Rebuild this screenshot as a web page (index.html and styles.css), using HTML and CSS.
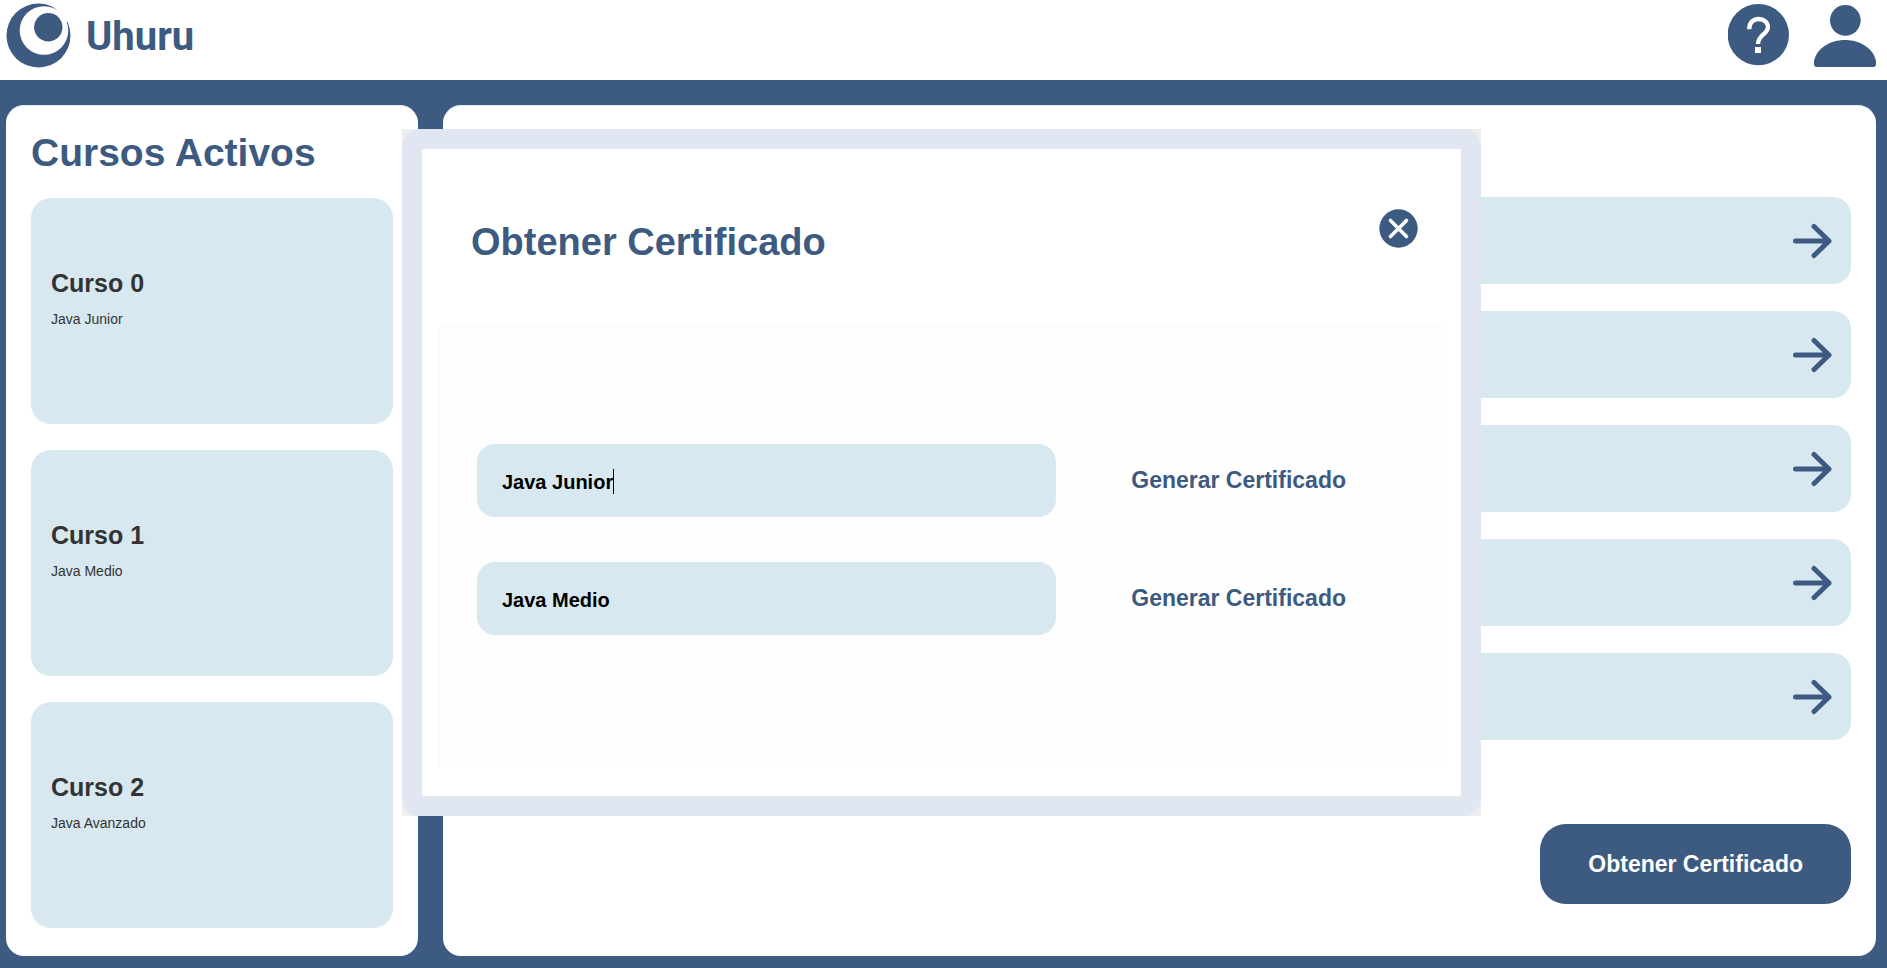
FILE: index.html
```html
<!DOCTYPE html>
<html lang="es">
<head>
<meta charset="utf-8">
<title>Uhuru</title>
<meta name="viewport" content="width=device-width, initial-scale=1">
<link rel="stylesheet" href="styles.css">
</head>
<body>
<header class="topbar">
  <a class="brand" href="#">
    <svg class="brand-logo" viewBox="0 0 65 65" aria-hidden="true">
      <circle cx="32.5" cy="32.5" r="32" fill="#3d5a80"/>
      <circle cx="38" cy="27.5" r="24.3" fill="#fff"/>
      <path d="M49 5 L61 19 L65 8 L55 0 Z" fill="#fff"/>
      <circle cx="42.3" cy="24.2" r="14.2" fill="#3d5a80"/>
    </svg>
    <span>Uhuru</span>
  </a>
  <nav class="tools" aria-label="Cuenta">
    <button class="icon-button" type="button" aria-label="Ayuda">
      <svg width="62" height="64" viewBox="84 9 186 192" aria-hidden="true">
        <circle cx="175" cy="104" r="92" fill="#3d5a80"/>
        <path d="M148 88 V85 C148 67 161 57 176 57 C192 57 204 67 204 82 C204 102 174 104 174 132" fill="none" stroke="#fff" stroke-width="13"/>
        <rect x="165" y="141" width="18" height="18" fill="#fff"/>
      </svg>
    </button>
    <button class="icon-button" type="button" aria-label="Perfil">
      <svg width="62" height="64" viewBox="342 9 186 192" aria-hidden="true">
        <circle cx="436" cy="61" r="46" fill="#3d5a80"/>
        <path d="M350 201 Q342 201 342 192 V183 C350 145 390 120 435 120 C480 120 520 145 528 183 V192 Q528 201 520 201 Z" fill="#3d5a80"/>
      </svg>
    </button>
  </nav>
</header>

<main class="workspace">
  <section class="panel courses">
    <h1 class="panel-title">Cursos Activos</h1>
    <div class="course-list">
      <article class="course">
        <h2>Curso 0</h2>
        <p>Java Junior</p>
      </article>
      <article class="course">
        <h2>Curso 1</h2>
        <p>Java Medio</p>
      </article>
      <article class="course">
        <h2>Curso 2</h2>
        <p>Java Avanzado</p>
      </article>
    </div>
  </section>

  <section class="panel detail">
    <div class="lessons">
      <button class="lesson" type="button" aria-label="Abrir"><svg class="arrow" viewBox="0 0 39 36" aria-hidden="true"><path d="M2.500 18H36M21 3.500L36 18L21 32.500"/></svg></button>
      <button class="lesson" type="button" aria-label="Abrir"><svg class="arrow" viewBox="0 0 39 36" aria-hidden="true"><path d="M2.500 18H36M21 3.500L36 18L21 32.500"/></svg></button>
      <button class="lesson" type="button" aria-label="Abrir"><svg class="arrow" viewBox="0 0 39 36" aria-hidden="true"><path d="M2.500 18H36M21 3.500L36 18L21 32.500"/></svg></button>
      <button class="lesson" type="button" aria-label="Abrir"><svg class="arrow" viewBox="0 0 39 36" aria-hidden="true"><path d="M2.500 18H36M21 3.500L36 18L21 32.500"/></svg></button>
      <button class="lesson" type="button" aria-label="Abrir"><svg class="arrow" viewBox="0 0 39 36" aria-hidden="true"><path d="M2.500 18H36M21 3.500L36 18L21 32.500"/></svg></button>
    </div>
    <button class="primary" type="button">Obtener Certificado</button>
  </section>
</main>

<div class="overlay">
  <div class="modal" role="dialog" aria-labelledby="modal-title">
    <div class="modal-frame">
      <div class="modal-body">
        <div class="modal-head">
          <h2 id="modal-title">Obtener Certificado</h2>
          <button class="close" type="button" aria-label="Cerrar">
            <svg width="39" height="39" viewBox="0 0 39 39" aria-hidden="true">
              <circle cx="19.500" cy="19.500" r="19.200" fill="#3d5a80"/>
              <path d="M11.500 11.500L27.500 27.500M27.500 11.500L11.500 27.500" stroke="#fff" stroke-width="3.600" stroke-linecap="round"/>
            </svg>
          </button>
        </div>
        <div class="certificates">
          <div class="certificate">
            <div class="field">
              <input type="text" value="Java Junior" aria-label="Curso 0">
              <span class="caret"></span>
            </div>
            <button class="generate" type="button">Generar Certificado</button>
          </div>
          <div class="certificate">
            <div class="field">
              <input type="text" value="Java Medio" aria-label="Curso 1">
            </div>
            <button class="generate" type="button">Generar Certificado</button>
          </div>
        </div>
      </div>
    </div>
  </div>
</div>
</body>
</html>
```

FILE: styles.css
```css
:root {
  --navy: #3d5a80;
  --sky: #d8e8f0;
  --mist: #e0e7f3;
}

* { box-sizing: border-box; }

body {
  margin: 0;
  min-height: 100vh;
  display: flex;
  flex-direction: column;
  position: relative;
  background: var(--navy);
  font-family: "Liberation Sans", Arial, sans-serif;
}

h1, h2, p { margin: 0; }

button {
  border: 0;
  padding: 0;
  background: none;
  font: inherit;
  color: inherit;
  cursor: pointer;
}

svg { display: block; }

.topbar {
  display: flex;
  justify-content: space-between;
  align-items: flex-start;
  height: 80px;
  padding: 3px 11px 0 6px;
  background: #fff;
}

.brand {
  display: flex;
  align-items: flex-start;
  gap: 15px;
  color: var(--navy);
  font: bold 40px/68px Roboto, sans-serif;
  text-decoration: none;
}

.brand-logo { width: 65px; height: 65px; }

.tools { display: flex; gap: 24px; }

.workspace {
  flex: 1;
  display: grid;
  grid-template-columns: 412fr 1433fr;
  gap: 25px;
  padding: 25px 11px 12px 6px;
}

.panel {
  border-top: 1px solid var(--mist);
  border-radius: 18px;
  background: #fff;
}

.courses { padding: 22px 25px 26px; }

.panel-title {
  color: var(--navy);
  font-size: 39px;
  line-height: 50px;
  margin-bottom: 20px;
}

.course-list { display: grid; gap: 26px; }

.course {
  display: flex;
  flex-direction: column;
  justify-content: center;
  gap: 8px;
  height: 226px;
  padding: 3px 29px 0 19px;
  border-radius: 20px;
  background: var(--sky);
  color: #333;
}

.course h2 { font-size: 25px; line-height: 30px; padding-left: 1px; }

.course p {
  min-height: 52px;
  padding: 2px 0;
  border: 1px solid #dce7f1;
  font-size: 14px;
  line-height: 20px;
}

.detail {
  display: flex;
  flex-direction: column;
  justify-content: space-between;
  align-items: flex-end;
  padding: 91px 25px 52px;
}

.lessons { display: grid; gap: 27px; width: 100%; }

.lesson {
  display: flex;
  align-items: center;
  justify-content: flex-end;
  height: 87px;
  padding-right: 19px;
  border-radius: 18px;
  background: var(--sky);
}

.arrow {
  width: 39px;
  height: 36px;
  fill: none;
  stroke: var(--navy);
  stroke-width: 5;
  stroke-linecap: round;
  stroke-linejoin: round;
}

.primary {
  height: 80px;
  padding: 0 48px;
  border-radius: 26px;
  background: var(--navy);
  color: #fff;
  font-size: 23px;
  font-weight: bold;
}

.overlay {
  position: absolute;
  inset: 0;
  display: flex;
  padding: 129px 406px 152px 402px;
}

.modal { flex: 1; display: flex; background: #eee; }

.modal-frame {
  flex: 1;
  display: flex;
  padding: 20px;
  border-radius: 18px;
  background: var(--mist);
}

.modal-body {
  flex: 1;
  display: flex;
  flex-direction: column;
  padding: 60px 17px 29px;
  border-radius: 2px;
  background: #fff;
}

.modal-head {
  display: flex;
  justify-content: space-between;
  align-items: flex-start;
  padding: 0 26px 0 32px;
  margin-bottom: 52px;
}

.modal-head h2 { color: var(--navy); font-size: 38px; line-height: 66px; }

.certificates {
  flex: 1;
  display: flex;
  flex-direction: column;
  justify-content: center;
  gap: 45px;
  padding: 0 97px 16px 37px;
  border: 1px solid #fafafa;
  background: #fefefe;
}

.certificate { display: flex; align-items: center; gap: 75px; }

.field { position: relative; flex: 1; display: flex; }

.field input {
  width: 100%;
  height: 73px;
  padding: 4px 24px 0 25px;
  border: 0;
  border-radius: 18px;
  outline: 0;
  background: var(--sky);
  color: #000;
  font: bold 20px/24px "Liberation Sans", Arial, sans-serif;
}

.caret {
  position: absolute;
  left: 136px;
  top: 25px;
  width: 1px;
  height: 25px;
  background: #000;
}

.generate { color: var(--navy); font-size: 23px; font-weight: bold; }
```
